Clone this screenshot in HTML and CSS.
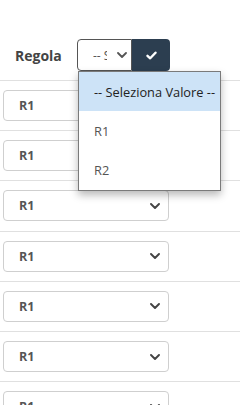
FILE: index.html
```html
<!DOCTYPE html>
<html>
<head>
<meta charset="utf-8">
<link rel="stylesheet" href="styles.css">
</head>
<body>
<div class="page">
  <div class="head">
    <div class="title">Regola</div>
    <div class="filter">
      <div class="hselect">
        <span class="htext">-- Seleziona Valore --</span>
        <svg class="chev" width="10" height="6" viewBox="0 0 10 6"><polyline points="1,1 5,5 9,1" fill="none" stroke="#555" stroke-width="1.8" stroke-linecap="round" stroke-linejoin="round"/></svg>
      </div>
      <div class="okbtn">
        <svg width="11" height="9" viewBox="0 0 11 9"><polyline points="1.5,4.8 4.2,7.3 9.5,1.7" fill="none" stroke="#fff" stroke-width="2.4" stroke-linecap="round" stroke-linejoin="round"/></svg>
      </div>
      <div class="menu">
        <div class="opt sel">-- Seleziona Valore --</div>
        <div class="opt">R1</div>
        <div class="opt">R2</div>
      </div>
    </div>
  </div>
  <div class="row"><div class="rsel"><span>R1</span><svg class="chev" width="10" height="6" viewBox="0 0 10 6"><polyline points="1,1 5,5 9,1" fill="none" stroke="#444" stroke-width="1.9" stroke-linecap="round" stroke-linejoin="round"/></svg></div></div>
  <div class="row"><div class="rsel"><span>R1</span><svg class="chev" width="10" height="6" viewBox="0 0 10 6"><polyline points="1,1 5,5 9,1" fill="none" stroke="#444" stroke-width="1.9" stroke-linecap="round" stroke-linejoin="round"/></svg></div></div>
  <div class="row"><div class="rsel"><span>R1</span><svg class="chev" width="10" height="6" viewBox="0 0 10 6"><polyline points="1,1 5,5 9,1" fill="none" stroke="#444" stroke-width="1.9" stroke-linecap="round" stroke-linejoin="round"/></svg></div></div>
  <div class="row"><div class="rsel"><span>R1</span><svg class="chev" width="10" height="6" viewBox="0 0 10 6"><polyline points="1,1 5,5 9,1" fill="none" stroke="#444" stroke-width="1.9" stroke-linecap="round" stroke-linejoin="round"/></svg></div></div>
  <div class="row"><div class="rsel"><span>R1</span><svg class="chev" width="10" height="6" viewBox="0 0 10 6"><polyline points="1,1 5,5 9,1" fill="none" stroke="#444" stroke-width="1.9" stroke-linecap="round" stroke-linejoin="round"/></svg></div></div>
  <div class="row"><div class="rsel"><span>R1</span><svg class="chev" width="10" height="6" viewBox="0 0 10 6"><polyline points="1,1 5,5 9,1" fill="none" stroke="#444" stroke-width="1.9" stroke-linecap="round" stroke-linejoin="round"/></svg></div></div>
  <div class="row"><div class="rsel"><span>R1</span><svg class="chev" width="10" height="6" viewBox="0 0 10 6"><polyline points="1,1 5,5 9,1" fill="none" stroke="#444" stroke-width="1.9" stroke-linecap="round" stroke-linejoin="round"/></svg></div></div>
</div>
</body>
</html>
```
FILE: styles.css
```css
* { box-sizing: border-box; }
html, body { margin: 0; padding: 0; background: #fff; }
body {
  font-family: "Open Sans", "Liberation Sans", sans-serif;
  color: #444;
  width: 240px;
  height: 405px;
  overflow: hidden;
}
.page { width: 240px; }
.head {
  height: 81px;
  display: flex;
  align-items: flex-end;
  padding: 0 0 9px 15px;
  border-bottom: 1px solid #e0e0e0;
}
.title {
  font-weight: 700;
  font-size: 14px;
  color: #444;
  width: 62px;
  line-height: 31px;
}
.filter {
  position: relative;
  display: flex;
  height: 32px;
}
.hselect {
  width: 55px;
  height: 32px;
  border: 1px solid #555;
  border-radius: 4px 0 0 4px;
  display: flex;
  align-items: center;
  padding-left: 15px;
  padding-right: 4px;
  background: #fff;
}
.htext {
  font-size: 12px;
  color: #555;
  white-space: nowrap;
  overflow: hidden;
  width: 14px;
  flex: none;
}
.hselect .chev { margin-left: auto; }
.okbtn {
  width: 38px;
  height: 32px;
  background: #2c3e50;
  border-radius: 0 4px 4px 0;
  display: flex;
  align-items: center;
  justify-content: center;
}
.menu {
  position: absolute;
  left: 1px;
  top: 32px;
  width: 143px;
  background: #fff;
  border: 1px solid #7a7a7a;
  box-shadow: 0 4px 8px rgba(0,0,0,0.28);
}
.opt {
  height: 39.3px;
  display: flex;
  align-items: center;
  padding-left: 15px;
  font-size: 12.8px;
  color: #555;
}
.opt.sel { background: #cde3f7; color: #222; }
.row {
  height: 50.2px;
  border-bottom: 1px solid #e0e0e0;
  display: flex;
  align-items: center;
  padding-left: 3px;
}
.rsel {
  width: 166px;
  height: 31px;
  border: 1px solid #cfcfcf;
  border-radius: 4px;
  display: flex;
  align-items: center;
  padding: 0 8px 0 15px;
  font-weight: 700;
  font-size: 12.5px;
  color: #555;
}
.rsel .chev { margin-left: auto; }
```
